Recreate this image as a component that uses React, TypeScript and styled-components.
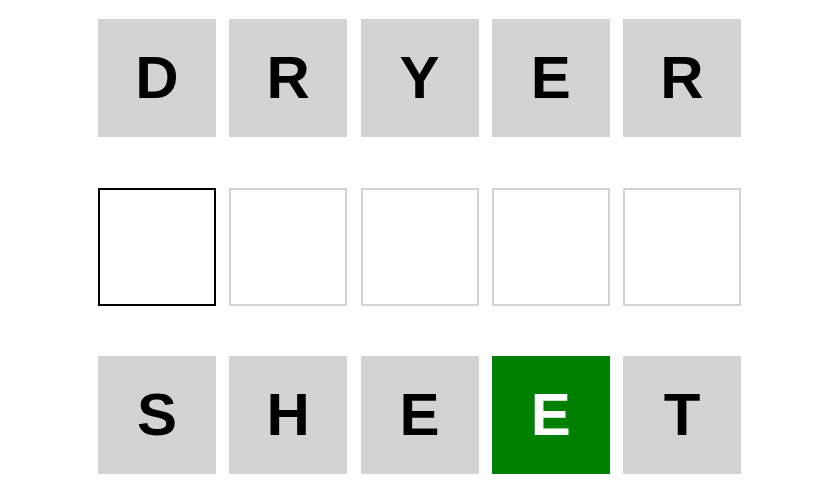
import React from 'react';
import styled, { createGlobalStyle } from 'styled-components';

const GlobalStyle = createGlobalStyle`
  html, body {
    margin: 0;
    padding: 0;
    background: #ffffff;
    font-family: 'Liberation Sans', Arial, sans-serif;
  }
`;

type TileState = 'filled' | 'active' | 'empty' | 'correct';

const Board = styled.div`
  display: flex;
  flex-direction: column;
  gap: 50.5px;
  padding: 19px 0 0 98px;
`;

const Row = styled.div`
  display: flex;
  gap: 13.25px;
`;

const Tile = styled.div<{ $state: TileState }>`
  box-sizing: border-box;
  width: 118px;
  height: 118px;
  display: flex;
  align-items: center;
  justify-content: center;
  font-size: 60px;
  font-weight: 700;
  line-height: 1;
  color: ${(p) => (p.$state === 'correct' ? '#ffffff' : '#000000')};
  background: ${(p) =>
    p.$state === 'correct'
      ? '#008000'
      : p.$state === 'filled'
        ? '#d3d3d3'
        : '#ffffff'};
  border: ${(p) =>
    p.$state === 'active'
      ? '2px solid #000000'
      : p.$state === 'empty'
        ? '2px solid #d3d3d3'
        : 'none'};
`;

const rows: { letter: string; state: TileState }[][] = [
  'DRYER'.split('').map((letter) => ({ letter, state: 'filled' as TileState })),
  [0, 1, 2, 3, 4].map((i) => ({
    letter: '',
    state: (i === 0 ? 'active' : 'empty') as TileState,
  })),
  'SHEET'.split('').map((letter, i) => ({
    letter,
    state: (i === 3 ? 'correct' : 'filled') as TileState,
  })),
];

const App = () => {
  return (
    <>
      <GlobalStyle />
      <Board>
        {rows.map((row, r) => (
          <Row key={r}>
            {row.map((tile, i) => (
              <Tile key={i} $state={tile.state}>
                {tile.letter}
              </Tile>
            ))}
          </Row>
        ))}
      </Board>
    </>
  );
};

export default App;
